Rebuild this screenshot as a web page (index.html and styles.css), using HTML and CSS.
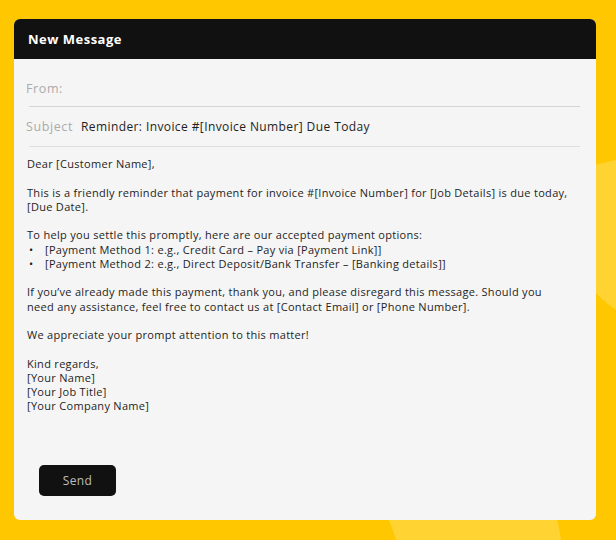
FILE: index.html
```html
<!DOCTYPE html>
<html>
<head>
<meta charset="utf-8">
<link rel="stylesheet" href="styles.css">
</head>
<body>
<svg class="bg" width="616" height="540" viewBox="0 0 616 540">
  <path d="M590,166 C600,164 610,161 616,160 L616,310 C606,303 598,296 590,286 Z" fill="#FFD332"/>
  <path d="M387,514 L556,514 C558,523 560,532 561,540 L396,540 C393,531 390,522 387,514 Z" fill="#FFD332"/>
</svg>
<div class="card">
  <div class="header">New Message</div>
  <div class="field from"><span class="label">From:</span></div>
  <div class="field subject"><span class="label">Subject</span><span class="value">Reminder: Invoice #[Invoice Number] Due Today</span></div>
  <div class="message">
    <p>Dear [Customer Name],</p>
    <p>This is a friendly reminder that payment for invoice #[Invoice Number] for [Job Details] is due today,<br>[Due Date].</p>
    <p class="lead">To help you settle this promptly, here are our accepted payment options:</p>
    <ul>
      <li>[Payment Method 1: e.g., Credit Card – Pay via [Payment Link]]</li>
      <li>[Payment Method 2: e.g., Direct Deposit/Bank Transfer – [Banking details]]</li>
    </ul>
    <p>If you’ve already made this payment, thank you, and please disregard this message. Should you<br>need any assistance, feel free to contact us at [Contact Email] or [Phone Number].</p>
    <p>We appreciate your prompt attention to this matter!</p>
    <p>Kind regards,<br>[Your Name]<br>[Your Job Title]<br>[Your Company Name]</p>
  </div>
  <div class="actions"><button class="send">Send</button></div>
</div>
</body>
</html>
```
FILE: styles.css
```css
html, body {
  margin: 0;
  padding: 0;
}
body {
  width: 616px;
  height: 540px;
  background: #FFC700;
  overflow: hidden;
  position: relative;
  font-family: "Open Sans", "Liberation Sans", sans-serif;
  padding-top: 19px;
  box-sizing: border-box;
}
.bg {
  position: absolute;
  left: 0;
  top: 0;
  z-index: 0;
}
.card {
  position: relative;
  z-index: 1;
  margin-left: 14px;
  width: 582px;
  height: 501px;
  background: #F5F5F5;
  border-radius: 6px;
  overflow: hidden;
  display: flex;
  flex-direction: column;
}
.header {
  height: 40px;
  flex: none;
  background: #111111;
  color: #ffffff;
  font-weight: 700;
  font-size: 13px;
  letter-spacing: 0.5px;
  display: flex;
  align-items: center;
  padding-left: 14px;
}
.field {
  display: flex;
  align-items: center;
  margin-left: 15px;
  margin-right: 16px;
  border-bottom: 1.5px solid #D4D4D4;
  box-sizing: border-box;
  flex: none;
}
.from {
  height: 48px;
  padding-top: 12px;
}
.subject {
  height: 40px;
  border-bottom-color: #DEDEDE;
}
.label {
  margin-left: -3px;
  color: #ABABAB;
  font-size: 12.5px;
  letter-spacing: 0.6px;
}
.value {
  margin-left: 8px;
  color: #1E1E1E;
  font-size: 12px;
  letter-spacing: 0.4px;
}
.message {
  flex: 1;
  padding: 10px 13px 0 13px;
  font-size: 11px;
  letter-spacing: 0.3px;
  line-height: 14.25px;
  color: #1E1E1E;
  white-space: nowrap;
}
.message p {
  margin: 0 0 14.25px 0;
}
.message p.lead {
  margin-bottom: 0;
}
.message ul {
  list-style: none;
  margin: 0 0 14.25px 0;
  padding-left: 2px;
}
.message li {
  display: flex;
}
.message li::before {
  content: "•";
  width: 16px;
  flex: none;
}
.actions {
  flex: none;
  padding: 0 0 24px 25px;
}
.send {
  width: 77px;
  height: 31px;
  border: none;
  border-radius: 5px;
  background: #111111;
  color: #BDBDBD;
  font-family: "Open Sans", "Liberation Sans", sans-serif;
  font-size: 12px;
  letter-spacing: 0.4px;
  padding: 0;
}
```
